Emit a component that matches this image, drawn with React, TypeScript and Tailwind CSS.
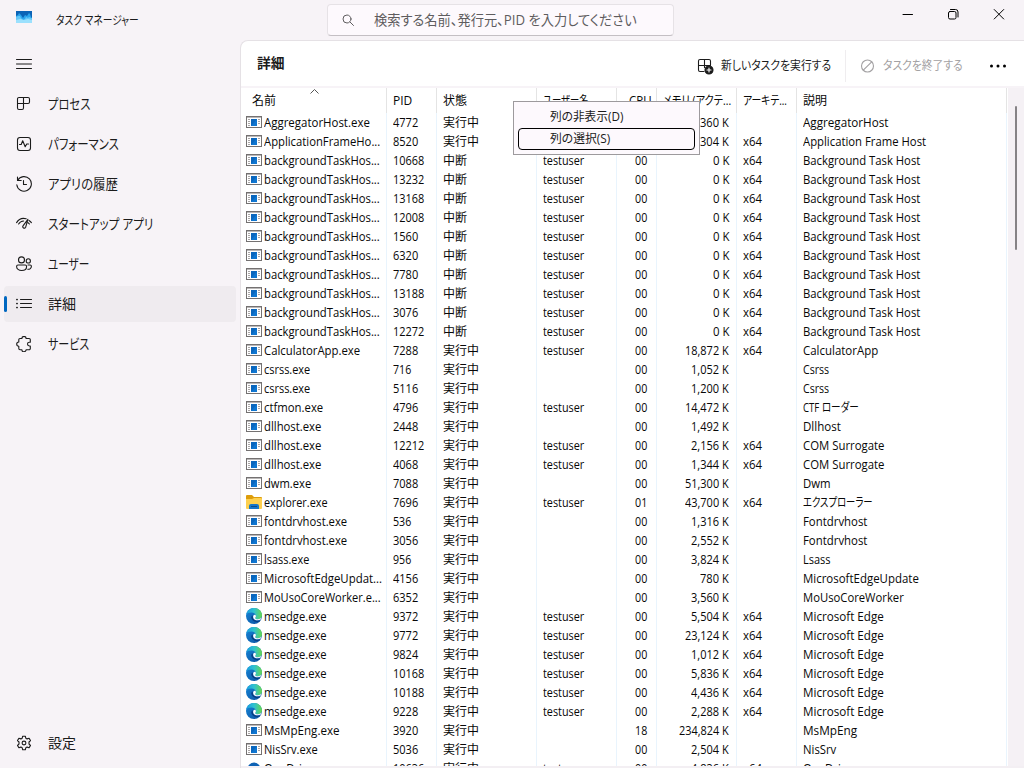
import { useLayoutEffect, useRef, useState, type ReactNode } from "react";

const JP = "font-['Open_Sans','Noto_Sans_CJK_JP',sans-serif]";

/** Condenses a label horizontally so that it takes exactly `w` pixels. */
function Fit({ w, children, className = "" }: { w: number; children: ReactNode; className?: string }) {
  const ref = useRef<HTMLSpanElement>(null);
  const [scale, setScale] = useState(1);
  useLayoutEffect(() => {
    if (ref.current) setScale(w / ref.current.offsetWidth);
  }, [w, children]);
  return (
    <span className={`block shrink-0 whitespace-nowrap ${className}`} style={{ width: w }}>
      <span
        ref={ref}
        className="inline-block origin-left [font-feature-settings:'palt']"
        style={{ transform: `scaleX(${scale})` }}
      >
        {children}
      </span>
    </span>
  );
}

function Stroke({ children, size = 16, sw = 1.1 }: { children: ReactNode; size?: number; sw?: number }) {
  return (
    <svg
      width={size}
      height={size}
      viewBox={`0 0 ${size} ${size}`}
      fill="none"
      stroke="currentColor"
      strokeWidth={sw}
      strokeLinecap="round"
      strokeLinejoin="round"
      className="shrink-0"
    >
      {children}
    </svg>
  );
}

const AppIcon = () => (
  <svg width="16" height="12" viewBox="0 0 16 12" className="shrink-0">
    <rect width="16" height="12" fill="#0b63b6" />
    <path d="M0 5l2-1 1-2 2 2 2 3 2-3 2 1 2-3 1 1 1 3 1 1v5H0z" fill="#2ba4ec" />
    <path d="M0 6l2-1 2 0 1 2 2 2 2-1 1-2 2 1 1-1 2 1 1 0v5H0z" fill="#62c6f8" />
    <path d="M0 9l4-1 4 1 4-1 4 1v3H0z" fill="#9be0fd" />
  </svg>
);

const ProcIcon = () => (
  <Stroke>
    <path d="M3 1.500H12a1.500 1.500 0 0 1 1.500 1.500v3A1.500 1.500 0 0 1 12 7.500H7.500V12A1.500 1.500 0 0 1 6 13.500H3A1.500 1.500 0 0 1 1.500 12V3A1.500 1.500 0 0 1 3 1.500M1.500 7.500H7.500V1.500" />
  </Stroke>
);
const PerfIcon = () => (
  <Stroke>
    <rect x="1.500" y="1.500" width="13" height="13" rx="2.500" />
    <path d="M3.500 8.500h1.700L6.700 4.800l2.500 6L10.700 8h1.800" />
  </Stroke>
);
const HistoryIcon = () => (
  <Stroke>
    <path d="M1.500 1v3.500H5.200M1.700 4.300A7.300 7.300 0 1 1 .8 8.700M7.500 4.500v4h3" />
  </Stroke>
);
const StartupIcon = () => (
  <Stroke>
    <path d="M.6 6.600A8.500 8.500 0 0 1 10.200 2.800M2.600 8A6 6 0 0 1 7.600 5M13 4.500A8.500 8.500 0 0 1 15.400 6.600M12 6.800a6 6 0 0 1 1.400 1.200M11.900 3.300L7 9.900a1.500 1.500 0 1 0 2.600 1.500z" />
  </Stroke>
);
const UsersIcon = () => (
  <Stroke>
    <circle cx="5.500" cy="3.900" r="3" />
    <circle cx="12.300" cy="4.900" r="2.100" />
    <path d="M2 9h7.200a1.400 1.400 0 0 1 1.400 1.400c0 2.600-2.200 4.100-5 4.100S.6 13 .6 10.400A1.400 1.400 0 0 1 2 9zM12 9h2.100a1.300 1.300 0 0 1 1.300 1.300c0 2-1.600 3.100-3.600 3" />
  </Stroke>
);
const ListIcon = () => (
  <Stroke>
    <path d="M4.500 3.500h11M4.500 7.500h11M4.500 11.500h11" />
    <path d="M.9 3.500h.2M.9 7.500h.2M.9 11.500h.2" strokeWidth="1.700" />
  </Stroke>
);
const ServiceIcon = () => (
  <Stroke>
    <path d="M4 2.500h1.900a2.100 2.100 0 0 1 4.200 0h3a1.200 1.200 0 0 1 1.200 1.200v2.500h-.9a1.900 1.900 0 0 0 0 3.800h.9v2.500a1.200 1.200 0 0 1-1.200 1.200h-3a2.100 2.100 0 0 1-4.200 0H4a1.200 1.200 0 0 1-1.200-1.200V10.200a2.100 2.100 0 0 1 0-4.200V3.700A1.200 1.200 0 0 1 4 2.500z" />
  </Stroke>
);
const GearIcon = () => (
  <Stroke>
    <circle cx="8" cy="8" r="1.900" />
    <path d="M6.700 1.200h2.600l.5 2 1.300.7 2-.6 1.400 2.300L13 7v2l1.500 1.400-1.400 2.300-2-.6-1.300.7-.5 2H6.700l-.5-2-1.300-.7-2 .6-1.400-2.300L3 9V7L1.500 5.600l1.400-2.300 2 .6 1.300-.7z" />
  </Stroke>
);

const ExeIcon = () => (
  <svg width="16" height="12" viewBox="0 0 16 12" className="mb-px shrink-0">
    <rect x=".5" y=".5" width="15" height="11" fill="#fff" stroke="#747171" />
    <path d="M0 .75h16" stroke="#747171" strokeWidth="1.500" />
    <path d="M2 3.500h2M2 5.500h2M2 7.500h2M2 9.500h2M12 3.500h2M12 5.500h2M12 7.500h2" stroke="#aaa6a6" />
    <rect x="5" y="3" width="6" height="7" fill="#0a66bd" />
    <path d="M5 10L11 3v7z" fill="#0f76d0" />
  </svg>
);
const FolderIcon = () => (
  <svg width="16" height="14" viewBox="0 0 16 14" className="mb-px shrink-0">
    <path d="M0 1Q0 0 1 0h5l2 2h7q1 0 1 1v4H0z" fill="#dd9d0b" />
    <path d="M0 4h6l2-1h7q1 0 1 1v9q0 1-1 1H1q-1 0-1-1z" fill="#fdd04f" />
    <path d="M3 14v-3q0-2 2-2h6q2 0 2 2v3z" fill="#1676c8" />
    <path d="M5 11.500h6" stroke="#0b4a86" />
  </svg>
);
const EdgeIcon = () => (
  <svg width="16" height="16" viewBox="0 0 16 16" className="mb-px shrink-0">
    <defs>
      <linearGradient id="edgeTop" x1="0" y1=".5" x2="1" y2=".5">
        <stop offset="0" stopColor="#1a9de0" />
        <stop offset=".5" stopColor="#2fc2cf" />
        <stop offset="1" stopColor="#66d84f" />
      </linearGradient>
      <linearGradient id="edgeBase" x1="0" y1="0" x2="1" y2="1">
        <stop offset="0" stopColor="#1687d8" />
        <stop offset="1" stopColor="#0c50a0" />
      </linearGradient>
    </defs>
    <circle cx="8" cy="8" r="8" fill="url(#edgeBase)" />
    <path d="M.2 6.500C1 2.700 4.200 0 8 0c4.700 0 8 3.500 8 7.300 0 2.400-1.800 4-4 4-1.600 0-2.800-.6-2.800-1.300 0-.5.700-.8.700-1.900C9.900 6 7.900 4.600 5.500 4.600 3 4.600 1 5.500.2 6.500z" fill="url(#edgeTop)" />
    <path d="M6.400 7.200C5.400 8 5 9.200 5.500 10.600c.8 2.300 3.200 3.500 5.700 3.300 1.500-.1 2.700-.7 3.700-1.500-3.500 1.400-7.300-.2-8-3-.2-.8-.2-1.600-.5-2.200z" fill="#083d83" />
    <path d="M9.900 8.200c0 1-.7 1.300-.7 1.800 0 .7 1.200 1.300 2.800 1.300 1.400 0 2.700-.6 3.400-1.700l-.3 1.700c-3.500 1.900-7.300 1-7.900-1.800-.3-1.500.5-2.700 1.500-2.700.7 0 1.200.6 1.200 1.400z" fill="#fff" />
  </svg>
);
const CloudIcon = () => (
  <svg width="16" height="16" viewBox="0 0 16 16" className="mb-px shrink-0">
    <circle cx="8" cy="9" r="6.500" fill="#0f62b4" />
  </svg>
);

const NAV: [string, number, () => ReactNode][] = [
  ["プロセス", 42, ProcIcon],
  ["パフォーマンス", 71, PerfIcon],
  ["アプリの履歴", 70, HistoryIcon],
  ["スタートアップ アプリ", 105, StartupIcon],
  ["ユーザー", 41, UsersIcon],
  ["詳細", 28, ListIcon],
  ["サービス", 41, ServiceIcon],
];

type Row = [string, string, number, string, string, string, string, string];
const BG = "backgroundTaskHos...";
const BD = "Background Task Host";
const ME = "Microsoft Edge";
const ROWS: Row[] = [
  ["AggregatorHost.exe", "4772", 1, "", "", "360", "", "AggregatorHost"],
  ["ApplicationFrameHo...", "8520", 1, "", "", "304", "x64", "Application Frame Host"],
  [BG, "10668", 0, "testuser", "00", "0", "x64", BD],
  [BG, "13232", 0, "testuser", "00", "0", "x64", BD],
  [BG, "13168", 0, "testuser", "00", "0", "x64", BD],
  [BG, "12008", 0, "testuser", "00", "0", "x64", BD],
  [BG, "1560", 0, "testuser", "00", "0", "x64", BD],
  [BG, "6320", 0, "testuser", "00", "0", "x64", BD],
  [BG, "7780", 0, "testuser", "00", "0", "x64", BD],
  [BG, "13188", 0, "testuser", "00", "0", "x64", BD],
  [BG, "3076", 0, "testuser", "00", "0", "x64", BD],
  [BG, "12272", 0, "testuser", "00", "0", "x64", BD],
  ["CalculatorApp.exe", "7288", 1, "testuser", "00", "18,872", "x64", "CalculatorApp"],
  ["csrss.exe", "716", 1, "", "00", "1,052", "", "Csrss"],
  ["csrss.exe", "5116", 1, "", "00", "1,200", "", "Csrss"],
  ["ctfmon.exe", "4796", 1, "testuser", "00", "14,472", "", "CTF ローダー"],
  ["dllhost.exe", "2448", 1, "", "00", "1,492", "", "Dllhost"],
  ["dllhost.exe", "12212", 1, "testuser", "00", "2,156", "x64", "COM Surrogate"],
  ["dllhost.exe", "4068", 1, "testuser", "00", "1,344", "x64", "COM Surrogate"],
  ["dwm.exe", "7088", 1, "", "00", "51,300", "", "Dwm"],
  ["explorer.exe", "7696", 1, "testuser", "01", "43,700", "x64", "エクスプローラー"],
  ["fontdrvhost.exe", "536", 1, "", "00", "1,316", "", "Fontdrvhost"],
  ["fontdrvhost.exe", "3056", 1, "", "00", "2,552", "", "Fontdrvhost"],
  ["lsass.exe", "956", 1, "", "00", "3,824", "", "Lsass"],
  ["MicrosoftEdgeUpdat...", "4156", 1, "", "00", "780", "", "MicrosoftEdgeUpdate"],
  ["MoUsoCoreWorker.e...", "6352", 1, "", "00", "3,560", "", "MoUsoCoreWorker"],
  ["msedge.exe", "9372", 1, "testuser", "00", "5,504", "x64", ME],
  ["msedge.exe", "9772", 1, "testuser", "00", "23,124", "x64", ME],
  ["msedge.exe", "9824", 1, "testuser", "00", "1,012", "x64", ME],
  ["msedge.exe", "10168", 1, "testuser", "00", "5,836", "x64", ME],
  ["msedge.exe", "10188", 1, "testuser", "00", "4,436", "x64", ME],
  ["msedge.exe", "9228", 1, "testuser", "00", "2,288", "x64", ME],
  ["MsMpEng.exe", "3920", 1, "", "18", "234,824", "", "MsMpEng"],
  ["NisSrv.exe", "5036", 1, "", "00", "2,504", "", "NisSrv"],
  ["OneDrive.exe", "10636", 1, "testuser", "00", "4,836", "x64", "OneDrive"],
];

const GRID = "grid grid-cols-[146px_50px_100px_80px_40px_80px_60px_210px]";
const HEAD = "flex h-[25px] items-center overflow-hidden border-r border-[#e4e4e4] pl-1.5";
const BODY = "flex h-[19px] items-center border-r border-[#e9f4fd] whitespace-nowrap";

const WIDTHS: Record<string, number> = {
  "AggregatorHost.exe": 106,
  "ApplicationFrameHo...": 116.5,
  "backgroundTaskHos...": 115.5,
  "CalculatorApp.exe": 96.5,
  "csrss.exe": 46.5,
  "ctfmon.exe": 59.5,
  "dllhost.exe": 57.5,
  "dwm.exe": 47.5,
  "explorer.exe": 63.5,
  "fontdrvhost.exe": 83.5,
  "lsass.exe": 45.5,
  "MicrosoftEdgeUpdat...": 118,
  "MoUsoCoreWorker.e...": 117,
  "msedge.exe": 62.5,
  "MsMpEng.exe": 75.5,
  "NisSrv.exe": 53.5,
  "OneDrive.exe": 72,
  AggregatorHost: 85.5,
  "Application Frame Host": 123.5,
  "Background Task Host": 117.5,
  CalculatorApp: 75.5,
  Csrss: 26.5,
  "CTF ローダー": 56,
  Dllhost: 37.5,
  "COM Surrogate": 81.5,
  Dwm: 27.5,
  "エクスプローラー": 70,
  Fontdrvhost: 64.5,
  Lsass: 27.5,
  MicrosoftEdgeUpdate: 115.5,
  MoUsoCoreWorker: 100.5,
  "Microsoft Edge": 80.5,
  MsMpEng: 54,
  NisSrv: 33,
  OneDrive: 50,
};

const numW = (s: string) => [...s].reduce((n, c) => n + (c === "," ? 2.8 : 6.2), 0);

function RowIcon({ name }: { name: string }) {
  if (name === "msedge.exe") return <EdgeIcon />;
  if (name === "explorer.exe") return <FolderIcon />;
  if (name === "OneDrive.exe") return <CloudIcon />;
  return <ExeIcon />;
}

function ProcessRow({ row }: { row: Row }) {
  const [name, pid, running, user, cpu, mem, arch, desc] = row;
  return (
    <div className={GRID}>
      <div className={`${BODY} gap-0.5 pl-[5px]`}>
        <RowIcon name={name} />
        <Fit w={WIDTHS[name]}>{name}</Fit>
      </div>
      <div className={`${BODY} pl-1.5`}>
        <Fit w={numW(pid)}>{pid}</Fit>
      </div>
      <div className={`${BODY} pl-1.5`}>
        <Fit w={running ? 36 : 24}>{running ? "実行中" : "中断"}</Fit>
      </div>
      <div className={`${BODY} pl-1.5`}>{user && <Fit w={41.5}>{user}</Fit>}</div>
      <div className={`${BODY} justify-end pr-[9px]`}>{cpu && <Fit w={12.5}>{cpu}</Fit>}</div>
      <div className={`${BODY} justify-end pr-[7px]`}>
        <Fit w={numW(mem) + 10}>{mem} K</Fit>
      </div>
      <div className={`${BODY} pl-1.5`}>{arch && <Fit w={19}>{arch}</Fit>}</div>
      <div className={`${BODY} pl-1.5`}>
        <Fit w={WIDTHS[desc]}>{desc}</Fit>
      </div>
    </div>
  );
}

function ContextMenu() {
  return (
    <div className="absolute left-[513px] top-[101px] flex h-[54px] w-[187px] flex-col border border-[#9d9a9d] bg-[#fdf9fd] px-1 pt-1 text-[12px] text-[#1b1b1b]">
      <div className="flex h-[22px] items-center pl-8">
        <Fit w={73}>列の非表示(D)</Fit>
      </div>
      <div className="flex h-[22px] w-[177px] items-center rounded-[4px] border border-black pl-[31px]">
        <Fit w={60}>列の選択(S)</Fit>
      </div>
    </div>
  );
}

export default function App() {
  return (
    <div className={`relative flex h-[768px] w-[1024px] flex-col overflow-hidden bg-[#f7f3f7] text-[#1b1b1b] ${JP}`}>
      <header className="flex h-10 shrink-0 items-start">
        <div className="flex h-10 w-[327px] items-center pl-4">
          <div className="mb-[6px]">
            <AppIcon />
          </div>
          <Fit w={83} className="ml-6 pt-0.5 text-[12px]">タスク マネージャー</Fit>
        </div>
        <div className="mt-1 flex h-8 w-[347px] items-center rounded-[4px] border border-b-[#c4bfc4] border-[#e6e2e6] bg-[#fdf9fd] pl-[14px] text-[14px] text-[#5f5d5f]">
          <Stroke size={12} sw={1}>
            <circle cx="5" cy="5" r="4" />
            <path d="M8 8l3.500 3.500" />
          </Stroke>
          <Fit w={263} className="ml-5 pb-0.5">検索する名前、発行元、PID を入力してください</Fit>
        </div>
        <div className="ml-auto flex h-7 items-center gap-[30px] pr-[17px] text-black">
          <Stroke size={16} sw={1}>
            <path d="M4 8.500h9.500" />
          </Stroke>
          <Stroke size={16} sw={1}>
            <rect x="3.500" y="5.500" width="7.500" height="7.500" rx="1.500" />
            <path d="M5.500 3.500H10.500a2.500 2.500 0 0 1 2.500 2.500v5" />
          </Stroke>
          <Stroke size={16} sw={1}>
            <path d="M3.200 3.500l9.500 9.500M12.700 3.500L3.200 13" />
          </Stroke>
        </div>
      </header>

      <div className="flex min-h-0 flex-1">
        <nav className="flex w-60 shrink-0 flex-col px-1 text-[14px]">
          <div className="flex h-12 items-center pl-3">
            <Stroke size={16} sw={1}>
              <path d="M.5 3.500h15M.5 8h15M.5 12.500h15" />
            </Stroke>
          </div>
          <ul className="-mt-0.5 flex flex-col gap-1">
            {NAV.map(([label, w, Icon]) => (
              <li
                key={label}
                className={`flex h-9 w-[232px] items-center rounded-[4px] ${label === "詳細" ? "bg-[#efebef]" : ""}`}
              >
                <span className={`h-4 w-[3px] rounded-full ${label === "詳細" ? "bg-[#0067c0]" : ""}`} />
                <span className="ml-[9px]">
                  <Icon />
                </span>
                <Fit w={w} className="mb-0.5 ml-4">{label}</Fit>
              </li>
            ))}
          </ul>
          <div className="mb-[7px] mt-auto flex h-9 items-center pl-3">
            <GearIcon />
            <Fit w={28} className="mb-0.5 ml-4">設定</Fit>
          </div>
        </nav>

        <main className="flex min-w-0 flex-1 flex-col rounded-tl-[8px] border-l border-t border-[#e5e1e5] bg-white">
          <div className="flex h-[45px] shrink-0 items-center pl-4">
            <Fit w={27.5} className="mb-0.5 text-[14px] font-semibold">詳細</Fit>
            <div className="ml-auto flex items-center pt-1 text-[12px]">
              <Stroke size={18}>
                <path d="M8 14.500H4A1.500 1.500 0 0 1 2.500 13V4A1.500 1.500 0 0 1 4 2.500h9A1.500 1.500 0 0 1 14.500 4v4M2.500 8.500h12M8.500 2.500v8" />
                <circle cx="13" cy="13" r="4" fill="#1b1b1b" />
                <path d="M11 13h4M13 11v4" stroke="#fff" />
              </Stroke>
              <Fit w={110} className="ml-[7px]">新しいタスクを実行する</Fit>
              <div className="ml-[14px] h-8 w-px bg-[#efedef]" />
              <div className="ml-[14px] flex items-center text-[#a3a1a3]">
                <Stroke size={16}>
                  <circle cx="7.500" cy="8" r="6" />
                  <path d="M3.300 12.200l8.400-8.400" />
                </Stroke>
                <Fit w={80} className="ml-[7px]">タスクを終了する</Fit>
              </div>
              <svg width="18" height="4" viewBox="0 0 18 4" className="ml-[26px] mr-[17px]">
                <circle cx="2.500" cy="2" r="1.500" />
                <circle cx="9" cy="2" r="1.500" />
                <circle cx="15.500" cy="2" r="1.500" />
              </svg>
            </div>
          </div>
          <div className="h-0.5 shrink-0 bg-[#f7f3f7]" />

          <div className="flex min-h-0 flex-1 border-b-2 border-[#f3eff3]">
            <div className="flex w-[766px] shrink-0 flex-col overflow-hidden text-[12px] leading-[19px] text-[#080808]">
              <div className={`${GRID} shrink-0`}>
                <div className={`${HEAD} relative pl-[11px]`}>
                  <Fit w={24}>名前</Fit>
                  <svg width="9" height="5" viewBox="0 0 9 5" className="absolute left-[69px] top-[1px]" fill="none" stroke="#555">
                    <path d="M.5 4.500l4-4 4 4" />
                  </svg>
                </div>
                <div className={HEAD}><Fit w={19}>PID</Fit></div>
                <div className={HEAD}><Fit w={24}>状態</Fit></div>
                <div className={HEAD}><Fit w={46}>ユーザー名</Fit></div>
                <div className={`${HEAD} justify-end pr-1`}><Fit w={23}>CPU</Fit></div>
                <div className={HEAD}><Fit w={68}>メモリ (アクテ...</Fit></div>
                <div className={HEAD}><Fit w={44}>アーキテ...</Fit></div>
                <div className={HEAD}><Fit w={24}>説明</Fit></div>
              </div>
              {ROWS.map((row, i) => (
                <ProcessRow key={i} row={row} />
              ))}
            </div>
            <div className="ml-px flex flex-1 flex-col bg-[#f5f1f5] pl-[7px] pt-[18px]">
              <div className="h-36 w-0.5 rounded-full bg-[#868386]" />
            </div>
          </div>
        </main>
      </div>
      <ContextMenu />
    </div>
  );
}
